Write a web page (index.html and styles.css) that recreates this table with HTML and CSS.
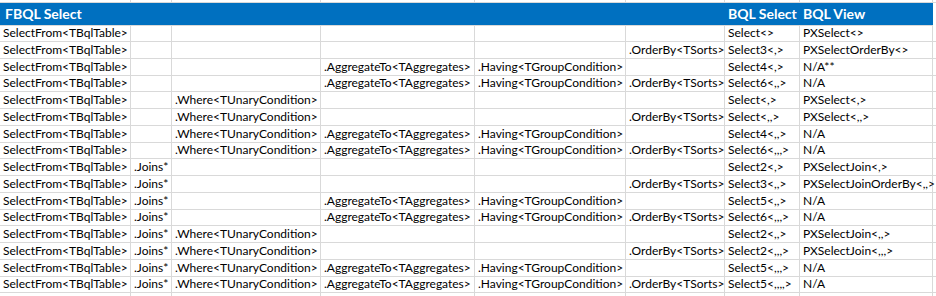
FILE: index.html
```html
<!DOCTYPE html>
<html>
<head>
<meta charset="utf-8">
<link rel="stylesheet" href="styles.css">
</head>
<body>
<div class="sheet">
  <div class="row top"><div class="c"></div><div class="c"></div><div class="c"></div><div class="c"></div><div class="c"></div><div class="c"></div><div class="c"></div><div class="c"></div><div class="c end"></div></div>
  <div class="row head"><div class="h wide">FBQL Select</div><div class="h">BQL Select</div><div class="h">BQL View</div><div class="h end"></div></div>
  <div class="row"><div class="c">SelectFrom&lt;TBqlTable&gt;</div><div class="c"></div><div class="c"></div><div class="c"></div><div class="c"></div><div class="c"></div><div class="c">Select&lt;&gt;</div><div class="c">PXSelect&lt;&gt;</div><div class="c end"></div></div>
  <div class="row"><div class="c">SelectFrom&lt;TBqlTable&gt;</div><div class="c"></div><div class="c"></div><div class="c"></div><div class="c"></div><div class="c">.OrderBy&lt;TSorts&gt;</div><div class="c">Select3&lt;,&gt;</div><div class="c">PXSelectOrderBy&lt;&gt;</div><div class="c end"></div></div>
  <div class="row"><div class="c">SelectFrom&lt;TBqlTable&gt;</div><div class="c"></div><div class="c"></div><div class="c">.AggregateTo&lt;TAggregates&gt;</div><div class="c">.Having&lt;TGroupCondition&gt;</div><div class="c"></div><div class="c">Select4&lt;,&gt;</div><div class="c">N/A**</div><div class="c end"></div></div>
  <div class="row"><div class="c">SelectFrom&lt;TBqlTable&gt;</div><div class="c"></div><div class="c"></div><div class="c">.AggregateTo&lt;TAggregates&gt;</div><div class="c">.Having&lt;TGroupCondition&gt;</div><div class="c">.OrderBy&lt;TSorts&gt;</div><div class="c">Select6&lt;,,&gt;</div><div class="c">N/A</div><div class="c end"></div></div>
  <div class="row"><div class="c">SelectFrom&lt;TBqlTable&gt;</div><div class="c"></div><div class="c">.Where&lt;TUnaryCondition&gt;</div><div class="c"></div><div class="c"></div><div class="c"></div><div class="c">Select&lt;,&gt;</div><div class="c">PXSelect&lt;,&gt;</div><div class="c end"></div></div>
  <div class="row"><div class="c">SelectFrom&lt;TBqlTable&gt;</div><div class="c"></div><div class="c">.Where&lt;TUnaryCondition&gt;</div><div class="c"></div><div class="c"></div><div class="c">.OrderBy&lt;TSorts&gt;</div><div class="c">Select&lt;,,&gt;</div><div class="c">PXSelect&lt;,,&gt;</div><div class="c end"></div></div>
  <div class="row"><div class="c">SelectFrom&lt;TBqlTable&gt;</div><div class="c"></div><div class="c">.Where&lt;TUnaryCondition&gt;</div><div class="c">.AggregateTo&lt;TAggregates&gt;</div><div class="c">.Having&lt;TGroupCondition&gt;</div><div class="c"></div><div class="c">Select4&lt;,,&gt;</div><div class="c">N/A</div><div class="c end"></div></div>
  <div class="row"><div class="c">SelectFrom&lt;TBqlTable&gt;</div><div class="c"></div><div class="c">.Where&lt;TUnaryCondition&gt;</div><div class="c">.AggregateTo&lt;TAggregates&gt;</div><div class="c">.Having&lt;TGroupCondition&gt;</div><div class="c">.OrderBy&lt;TSorts&gt;</div><div class="c">Select6&lt;,,,&gt;</div><div class="c">N/A</div><div class="c end"></div></div>
  <div class="row"><div class="c">SelectFrom&lt;TBqlTable&gt;</div><div class="c">.Joins*</div><div class="c"></div><div class="c"></div><div class="c"></div><div class="c"></div><div class="c">Select2&lt;,&gt;</div><div class="c">PXSelectJoin&lt;,&gt;</div><div class="c end"></div></div>
  <div class="row"><div class="c">SelectFrom&lt;TBqlTable&gt;</div><div class="c">.Joins*</div><div class="c"></div><div class="c"></div><div class="c"></div><div class="c">.OrderBy&lt;TSorts&gt;</div><div class="c">Select3&lt;,,&gt;</div><div class="c">PXSelectJoinOrderBy&lt;,,&gt;</div><div class="c end"></div></div>
  <div class="row"><div class="c">SelectFrom&lt;TBqlTable&gt;</div><div class="c">.Joins*</div><div class="c"></div><div class="c">.AggregateTo&lt;TAggregates&gt;</div><div class="c">.Having&lt;TGroupCondition&gt;</div><div class="c"></div><div class="c">Select5&lt;,,&gt;</div><div class="c">N/A</div><div class="c end"></div></div>
  <div class="row"><div class="c">SelectFrom&lt;TBqlTable&gt;</div><div class="c">.Joins*</div><div class="c"></div><div class="c">.AggregateTo&lt;TAggregates&gt;</div><div class="c">.Having&lt;TGroupCondition&gt;</div><div class="c">.OrderBy&lt;TSorts&gt;</div><div class="c">Select6&lt;,,,&gt;</div><div class="c">N/A</div><div class="c end"></div></div>
  <div class="row"><div class="c">SelectFrom&lt;TBqlTable&gt;</div><div class="c">.Joins*</div><div class="c">.Where&lt;TUnaryCondition&gt;</div><div class="c"></div><div class="c"></div><div class="c"></div><div class="c">Select2&lt;,,&gt;</div><div class="c">PXSelectJoin&lt;,,&gt;</div><div class="c end"></div></div>
  <div class="row"><div class="c">SelectFrom&lt;TBqlTable&gt;</div><div class="c">.Joins*</div><div class="c">.Where&lt;TUnaryCondition&gt;</div><div class="c"></div><div class="c"></div><div class="c">.OrderBy&lt;TSorts&gt;</div><div class="c">Select2&lt;,,,&gt;</div><div class="c">PXSelectJoin&lt;,,,&gt;</div><div class="c end"></div></div>
  <div class="row"><div class="c">SelectFrom&lt;TBqlTable&gt;</div><div class="c">.Joins*</div><div class="c">.Where&lt;TUnaryCondition&gt;</div><div class="c">.AggregateTo&lt;TAggregates&gt;</div><div class="c">.Having&lt;TGroupCondition&gt;</div><div class="c"></div><div class="c">Select5&lt;,,,&gt;</div><div class="c">N/A</div><div class="c end"></div></div>
  <div class="row"><div class="c">SelectFrom&lt;TBqlTable&gt;</div><div class="c">.Joins*</div><div class="c">.Where&lt;TUnaryCondition&gt;</div><div class="c">.AggregateTo&lt;TAggregates&gt;</div><div class="c">.Having&lt;TGroupCondition&gt;</div><div class="c">.OrderBy&lt;TSorts&gt;</div><div class="c">Select5&lt;,,,,&gt;</div><div class="c">N/A</div><div class="c end"></div></div>
  <div class="row"><div class="c"></div><div class="c"></div><div class="c"></div><div class="c"></div><div class="c"></div><div class="c"></div><div class="c"></div><div class="c"></div><div class="c end"></div></div>
</div>
</body>
</html>
```

FILE: styles.css
```css
html, body {
  margin: 0;
  padding: 0;
  background: #ffffff;
  overflow: hidden;
}
.sheet {
  width: 936px;
  margin-top: -14px;
  font-family: Lato, "Open Sans", sans-serif;
  font-size: 12px;
  color: #000000;
}
.row {
  display: grid;
  grid-template-columns: 131px 41px 149px 154px 151px 99px 75px 133px 1fr;
  height: 16.75px;
}
.row.top {
  height: 17px;
}
.c {
  border-right: 1px solid #d9d9d9;
  border-bottom: 1px solid #d9d9d9;
  padding: 0 0 0 3px;
  white-space: nowrap;
  overflow: visible;
  line-height: 16px;
  box-sizing: border-box;
}
.c.end {
  border-right: none;
}
.row.head {
  height: 22px;
  grid-template-columns: 725px 75px 133px 1fr;
}
.h {
  background: #0070c0;
  color: #ffffff;
  font-weight: bold;
  font-size: 14px;
  line-height: 22px;
  padding-left: 3px;
  white-space: nowrap;
  border-bottom: 1px solid #d9d9d9;
  box-sizing: border-box;
}
.h.wide {
  padding-left: 5px;
}
.h.end {
  background: #ffffff;
  border-bottom: none;
}
```
